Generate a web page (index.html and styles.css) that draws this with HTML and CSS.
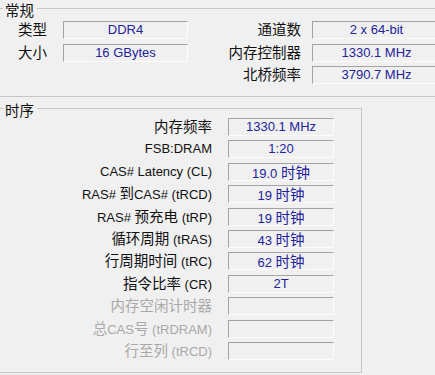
FILE: index.html
```html
<!DOCTYPE html>
<html lang="zh-CN">
<head>
    <meta charset="UTF-8">
    <title>内存</title>
    <link rel="stylesheet" href="styles.css">
</head>
<body>
    <fieldset class="group group-general">
        <legend><span class="legend-text">常规</span></legend>
        <div class="general-grid">
            <div class="label"><span class="zh">类型</span></div>
            <div class="field">DDR4</div>
            <div class="label"><span class="zh">通道数</span></div>
            <div class="field">2 x 64-bit</div>

            <div class="label"><span class="zh">大小</span></div>
            <div class="field">16 GBytes</div>
            <div class="label"><span class="zh">内存控制器</span></div>
            <div class="field">1330.1 MHz</div>

            <div class="label"></div>
            <div class="empty"></div>
            <div class="label"><span class="zh">北桥频率</span></div>
            <div class="field">3790.7 MHz</div>
        </div>
    </fieldset>

    <fieldset class="group group-timing">
        <legend><span class="legend-text">时序</span></legend>
        <div class="timing-grid">
            <div class="label"><span class="zh">内存频率</span></div>
            <div class="field">1330.1 MHz</div>

            <div class="label">FSB:DRAM</div>
            <div class="field">1:20</div>

            <div class="label">CAS# Latency (CL)</div>
            <div class="field">19.0 <span class="zh">时钟</span></div>

            <div class="label">RAS# <span class="zh">到</span>CAS# (tRCD)</div>
            <div class="field">19 <span class="zh">时钟</span></div>

            <div class="label">RAS# <span class="zh">预充电</span> (tRP)</div>
            <div class="field">19 <span class="zh">时钟</span></div>

            <div class="label"><span class="zh">循环周期</span> (tRAS)</div>
            <div class="field">43 <span class="zh">时钟</span></div>

            <div class="label"><span class="zh">行周期时间</span> (tRC)</div>
            <div class="field">62 <span class="zh">时钟</span></div>

            <div class="label"><span class="zh">指令比率</span> (CR)</div>
            <div class="field">2T</div>

            <div class="label disabled"><span class="zh">内存空闲计时器</span></div>
            <div class="field"></div>

            <div class="label disabled"><span class="zh">总</span>CAS<span class="zh">号</span> (tRDRAM)</div>
            <div class="field"></div>

            <div class="label disabled"><span class="zh">行至列</span> (tRCD)</div>
            <div class="field"></div>
        </div>
    </fieldset>
</body>
</html>
```

FILE: styles.css
```css
/* Aba de memória */
body {
    margin: 0;
    background: #f0f0f0;
    font-family: "Liberation Sans", "Noto Sans CJK SC", sans-serif;
    font-size: 13px;
    color: #111;
    overflow: hidden;
}
.zh {
    font-family: "Noto Sans CJK SC", sans-serif;
    font-size: 14.5px;
    line-height: 16px;
}
.group {
    border: 1px solid #c6c6c6;
    margin: 0 0 0 -1px;
    padding: 0;
    min-width: 0;
}
.group legend {
    margin-left: 3px;
    padding: 0 3px 0 2px;
    font-family: "Noto Sans CJK SC", sans-serif;
    font-size: 14.5px;
    line-height: 16px;
}
.legend-text {
    position: relative;
    top: 2px;
}
.group-general {
    width: 460px;
    padding: 5px 0 12px;
}
.group-timing {
    width: 361px;
    margin-top: 3px;
    padding: 2px 0 12px;
}
.general-grid {
    display: grid;
    grid-template-columns: 47px 125px 97px 124px;
    grid-auto-rows: 18px;
    column-gap: 16px;
    row-gap: 4.5px;
}
.general-grid .field:nth-child(4n) {
    margin-left: -5px;
}
.timing-grid {
    display: grid;
    grid-template-columns: 212px 106px;
    grid-auto-rows: 18px;
    column-gap: 16px;
    row-gap: 4.4px;
}
.label {
    text-align: right;
    white-space: nowrap;
    line-height: 18px;
}
.label.disabled {
    color: #a9a9a9;
}
.field {
    box-sizing: border-box;
    text-align: center;
    white-space: nowrap;
    border-top: 1px solid #a3a3a3;
    border-left: 1px solid #a3a3a3;
    border-bottom: 1px solid #fcfcfc;
    border-right: 1px solid #fcfcfc;
    color: #23239b;
    line-height: 16px;
}
```
